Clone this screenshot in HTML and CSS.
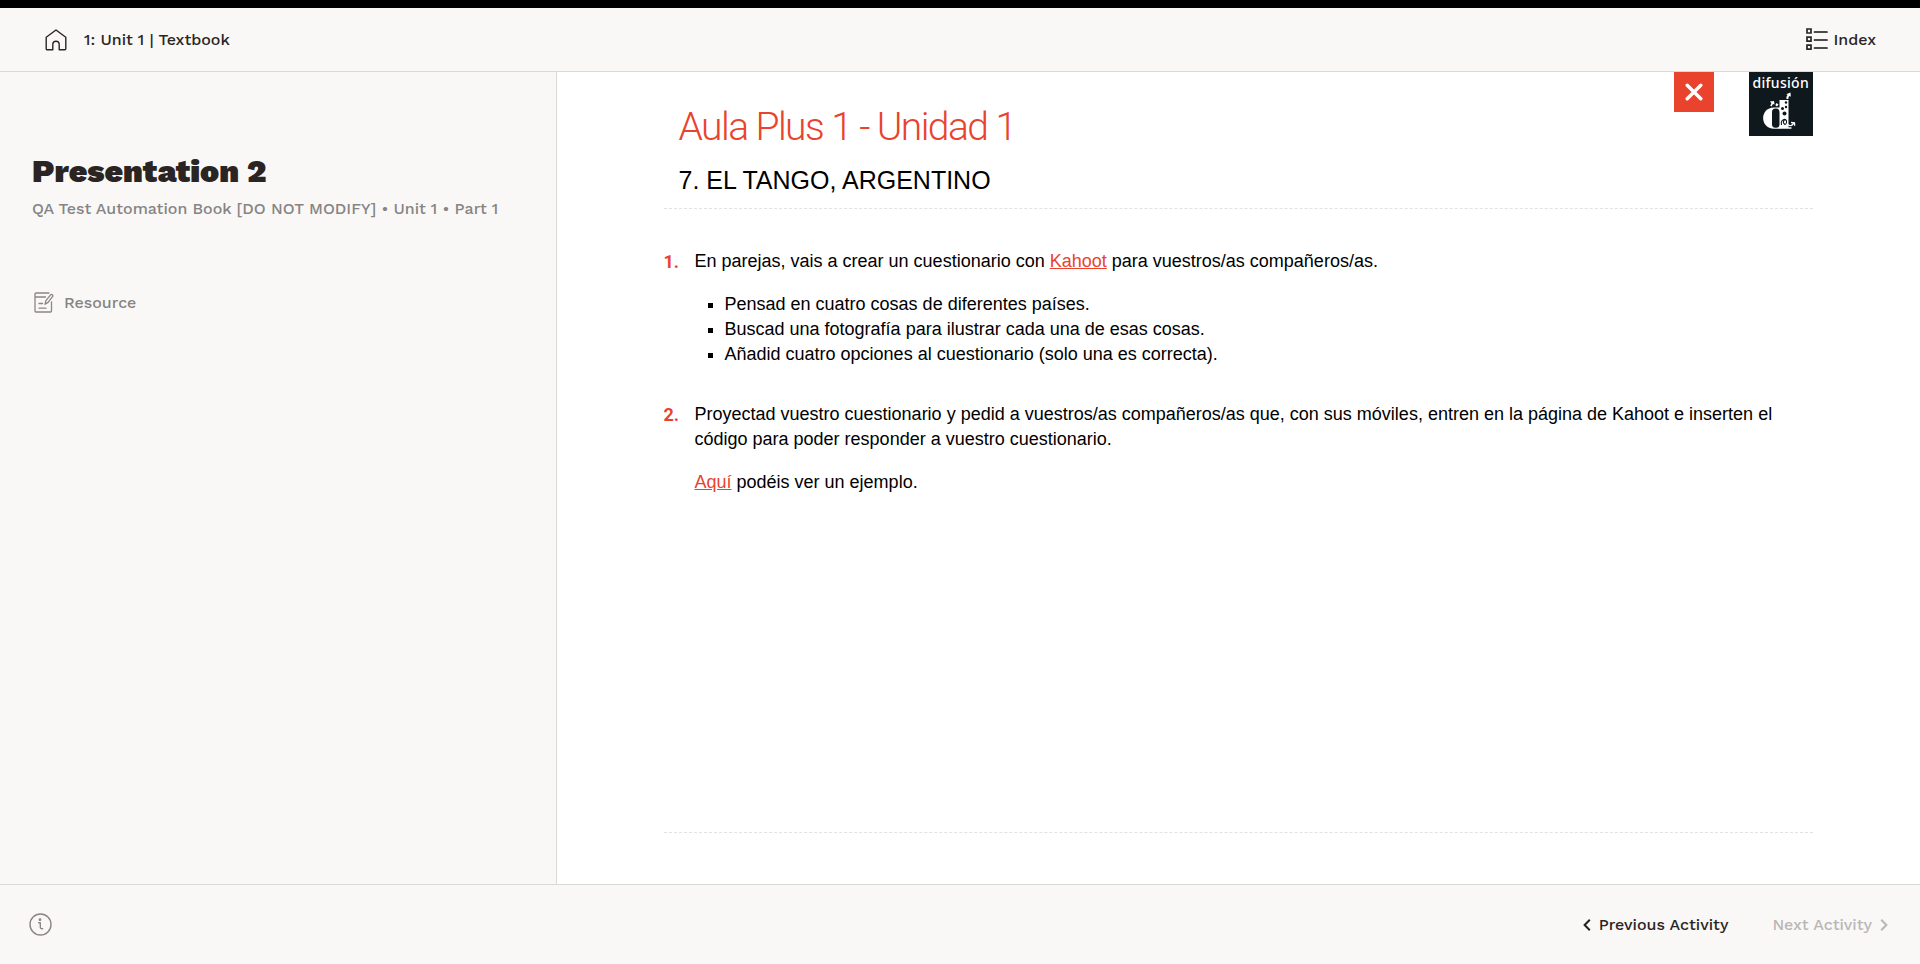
FILE: index.html
```html
<!DOCTYPE html>
<html lang="en">
<head>
<meta charset="utf-8">
<title>Presentation 2</title>
<link rel="stylesheet" href="styles.css">
</head>
<body>
<div class="app">
  <header class="topbar">
    <a class="home">
      <svg width="22" height="22" viewBox="0 0 22 22" fill="none" stroke="#2a2522" stroke-width="1.4" stroke-linejoin="round"><path d="M1.2 8.2 11 1l9.800 7.200v11.500a1 1 0 0 1-1 1H14.200v-5.200a3.200 3.200 0 0 0-6.400 0v5.200H2.200a1 1 0 0 1-1-1z"/></svg>
      <span class="crumb">1: Unit 1 | Textbook</span>
    </a>
    <a class="index">
      <svg width="22" height="23" viewBox="0 0 22 23" fill="none" stroke="#2a2522" stroke-width="1.7"><path d="M1 1h4v4H1zM1 9.200h4v4H1zM1 17.200h4v4H1z"/><path d="M8.500 4H21M8.500 12H21M8.500 20H21" stroke-width="1.7" stroke-linecap="round" stroke="#111"/></svg>
      <span class="index-label">Index</span>
    </a>
  </header>
  <main class="main">
    <aside class="side">
      <h1 class="title">Presentation 2</h1>
      <p class="meta">QA Test Automation Book [DO NOT MODIFY] • Unit 1 • Part 1</p>
      <div class="resource">
        <svg width="20" height="21" viewBox="0 0 20 21" fill="none" stroke="#8d8583" stroke-width="1.300" stroke-linecap="round" stroke-linejoin="round"><path d="M15 1H2a1 1 0 0 0-1 1v17a1 1 0 0 0 1 1h14.500a1 1 0 0 0 1-1V10M1 5h10.500M5 11.500h3.500M5 16.200h7"/><path d="m11 12.300.9-3.600 4.500-5.600c1.300-1.500 3.200 0 2.100 1.600l-4.400 5.700z"/></svg>
        <span class="resource-label">Resource</span>
      </div>
    </aside>
    <section class="content">
      <div class="head">
        <div class="heading">
          <h2 class="book">Aula Plus 1 - Unidad 1</h2>
          <h3 class="lesson">7. EL TANGO, ARGENTINO</h3>
        </div>
        <div class="close"><svg width="18" height="18" viewBox="0 0 18 18" stroke="#fff" stroke-width="3.400" stroke-linecap="round"><path d="m2.200 2.200 13.600 13.600M15.800 2.200 2.200 15.800"/></svg></div>
        <div class="logo">
          <span class="logo-name">difusión</span>
          <svg class="logo-mark" width="34" height="38" viewBox="0 0 34 38">
            <g fill="#fff"><path d="M18 15.500v21.300h-6C-2.500 36.500-2.500 15.500 12 15.500z"/><path d="M17.500 8h9v27.300h3v1.500h-12z"/><path d="M24.500 7c-.3-2 .2-3 1.200-4l-1.500-.7L28.500.5l.3 4.200-1.300-.7c-1 .8-1.200 1.500-1 3zM8 9.500l4-.5.5 3.500-1.500-.5-1.500 2.500-1.300-1 1.200-2zM14.500 11l2 1.500-1.500 2-1.700-1.300z"/></g>
            <rect x="10" y="16.500" width="7.500" height="19.300" rx="3.500" fill="#0e181d"/>
            <g fill="#0e181d"><circle cx="20.500" cy="16.500" r="1.500"/><circle cx="24" cy="15" r="1.200"/><circle cx="22.500" cy="21.500" r="2"/><circle cx="24" cy="10.500" r="1.200"/></g>
            <path d="M19.500 33c-1.500-7 6-7 5-2.500s-5-.5-2-2.500" fill="none" stroke="#0e181d" stroke-width="1.100"/>
            <path d="M25.500 32.500c3 2 4 1.500 6.500-1.500M29 30.500l3.500.3.200 3" fill="none" stroke="#fff" stroke-width="1.300"/>
          </svg>
        </div>
      </div>
      <div class="body">
        <div class="item">
          <span class="num">1.</span>
          <div class="text">
            <p>En parejas, vais a crear un cuestionario con <a>Kahoot</a> para vuestros/as compañeros/as.</p>
            <ul class="bullets">
              <li>Pensad en cuatro cosas de diferentes países.</li>
              <li>Buscad una fotografía para ilustrar cada una de esas cosas.</li>
              <li>Añadid cuatro opciones al cuestionario (solo una es correcta).</li>
            </ul>
          </div>
        </div>
        <div class="item">
          <span class="num">2.</span>
          <div class="text">
            <p>Proyectad vuestro cuestionario y pedid a vuestros/as compañeros/as que, con sus móviles, entren en la página de Kahoot e inserten el código para poder responder a vuestro cuestionario.</p>
            <p><a>Aquí</a> podéis ver un ejemplo.</p>
          </div>
        </div>
      </div>
    </section>
  </main>
  <footer class="footer">
    <svg class="info" width="23" height="23" viewBox="0 0 23 23" fill="none" stroke="#8d8583" stroke-width="1.400" stroke-linecap="round" stroke-linejoin="round"><circle cx="11.500" cy="11.500" r="10.500"/><path d="M9.700 9.800h1.600v4.200c0 1.500.9 2 2.300 1.700"/><circle cx="11" cy="6.700" r=".7" fill="#8d8583"/></svg>
    <a class="prev"><svg width="8" height="12" viewBox="0 0 8 12" fill="none" stroke="#222" stroke-width="2"><path d="M6.800.8 1.600 6l5.200 5.200"/></svg><span class="prev-label">Previous Activity</span></a>
    <a class="next"><span class="next-label">Next Activity</span><svg width="8" height="12" viewBox="0 0 8 12" fill="none" stroke="#b9b7b6" stroke-width="2"><path d="M1.200.8 6.400 6l-5.200 5.200"/></svg></a>
  </footer>
</div>
</body>
</html>
```
FILE: styles.css
```css
* { box-sizing: border-box; }
body { margin: 0; font-family: "Work Sans", Inter, sans-serif; color: #2a2522; overflow: hidden; }
h1, h2, h3, p, ul { margin: 0; padding: 0; }
.app { height: 964px; display: flex; flex-direction: column; background: #f9f8f6; border-top: 8px solid #000; }
.topbar { height: 64px; border-bottom: 1px solid #d9d9d8; display: flex; align-items: center; justify-content: space-between; padding: 0 44px 0 45px; font-size: 16px; font-weight: 500; }
.home, .index { display: flex; align-items: center; }
.home { gap: 17px; }
.index { gap: 6px; }
.main { height: 812px; display: flex; }
.side { width: 557px; border-right: 1px solid #d9d9d8; padding: 79px 32px 0; }
.title { font-size: 32px; line-height: 40px; font-weight: 900; white-space: nowrap; }
.meta { margin-top: 7px; font-size: 16px; line-height: 22px; font-weight: 500; color: #868484; white-space: nowrap; }
.resource { margin-top: 71px; padding-left: 2px; display: flex; align-items: center; gap: 10px; height: 22px; font-size: 16px; font-weight: 500; color: #868484; }
.content { flex: 1; background: #fff; padding: 0 107px 0 106.500px; font-family: "Liberation Sans", Arial, sans-serif; color: #000; }
.head { height: 137px; border-bottom: 1px dashed #e2e2e2; display: flex; align-items: flex-start; }
.heading { flex: 1; padding: 30px 0 0 15px; }
.book { font-family: Roboto, sans-serif; font-weight: 300; font-size: 39px; line-height: 50px; letter-spacing: -1.560px; color: #e9432e; }
.lesson { margin-top: 13px; font-weight: 400; font-size: 25px; line-height: 30px; }
.close { width: 40px; height: 40px; background: #e9432e; display: flex; align-items: center; justify-content: center; margin-right: 35px; }
.logo { width: 64.500px; height: 64px; background: #0e181d; color: #fff; display: flex; flex-direction: column; align-items: center; }
.logo-name { font-family: "Noto Sans", sans-serif; font-weight: 500; font-size: 14px; line-height: 21px; height: 20px; letter-spacing: .3px; }
.logo-mark { margin-right: 3px; }
.body { height: 624px; border-bottom: 1px dashed #e2e2e2; padding-top: 40px; font-size: 18px; line-height: 25px; }
.item { display: flex; margin-bottom: 35px; }
.num { width: 31px; font-family: Roboto, sans-serif; font-weight: 700; color: #e9432e; }
.text { flex: 1; display: flex; flex-direction: column; gap: 18px; }
.text a { color: #e9432e; text-decoration: underline; }
.bullets { list-style: square; padding-left: 30px; }
.footer { height: 80px; border-top: 1px solid #d9d9d8; display: flex; align-items: center; padding: 0 32px 0 28.500px; font-size: 16px; font-weight: 500; }
.info { margin-right: auto; }
.prev, .next { display: flex; align-items: center; gap: 8px; }
.prev { margin-right: 44px; }
.next { color: #b9b7b6; }
```
